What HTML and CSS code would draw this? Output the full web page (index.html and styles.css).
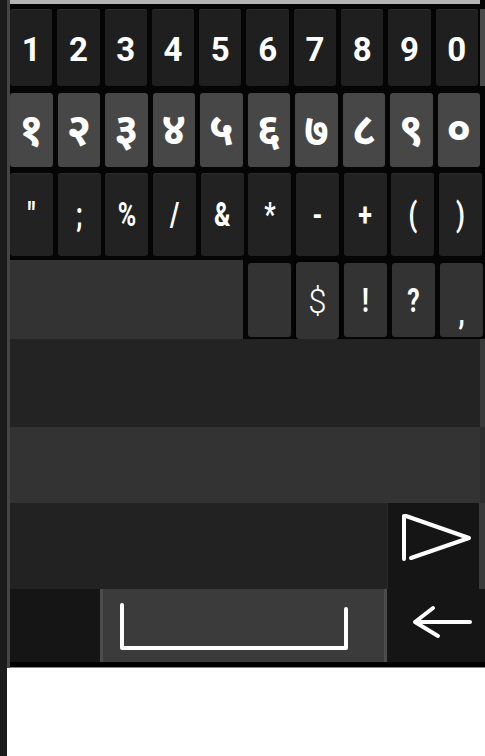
FILE: index.html
```html
<!DOCTYPE html>
<html>
<head>
<meta charset="utf-8">
<link rel="stylesheet" href="styles.css">
</head>
<body>
<div class="page">
  <div class="kb">
    <div class="topbar"></div>
    <div class="row r1">
      <div class="key">1</div><div class="key">2</div><div class="key">3</div><div class="key">4</div><div class="key">5</div>
      <div class="key">6</div><div class="key">7</div><div class="key">8</div><div class="key">9</div><div class="key">0</div>
    </div>
    <div class="row r2">
      <div class="key">१</div><div class="key">२</div><div class="key">३</div><div class="key">४</div><div class="key">५</div>
      <div class="key">६</div><div class="key">७</div><div class="key">८</div><div class="key">९</div><div class="key">०</div>
    </div>
    <div class="row r3">
      <div class="key"><span class="sym">"</span></div><div class="key"><span class="sym">;</span></div><div class="key"><span class="sym">%</span></div><div class="key"><span class="sym">/</span></div><div class="key"><span class="sym">&amp;</span></div>
      <div class="key"><span class="sym">*</span></div><div class="key"><span class="sym">-</span></div><div class="key"><span class="sym">+</span></div><div class="key"><span class="sym">(</span></div><div class="key"><span class="sym">)</span></div>
    </div>
    <div class="row r4">
      <div class="blank"></div>
      <div class="key"></div>
      <div class="key sel"><span class="dollar">$</span></div>
      <div class="key"><span class="sym">!</span></div>
      <div class="key"><span class="sym">?</span></div>
      <div class="key"><span class="sym comma">,</span></div>
    </div>
    <div class="panel p1"></div>
    <div class="panel p2"></div>
    <div class="bar b1">
      <div class="fill"></div>
      <div class="send">
        <svg width="91" height="86" viewBox="0 0 91 86"><path d="M16 13 V56 M23 55 L81 35 L18 13" fill="none" stroke="#fff" stroke-width="4" stroke-linecap="round" stroke-linejoin="round"/></svg>
      </div>
      <div class="edgefill"></div>
    </div>
    <div class="bar b2">
      <div class="fn"></div>
      <div class="space">
        <svg width="281" height="73" viewBox="0 0 281 73"><path d="M19 16 V59 H243 V20" fill="none" stroke="#fff" stroke-width="4" stroke-linecap="round" stroke-linejoin="round"/></svg>
      </div>
      <div class="back">
        <svg width="93" height="73" viewBox="0 0 93 73"><path d="M28 33 H83 M46 19 L28 33 L51 47" fill="none" stroke="#fff" stroke-width="4" stroke-linecap="round" stroke-linejoin="round"/></svg>
      </div>
      <div class="edgefill2"></div>
    </div>
    <div class="bottomline"></div>
  </div>
</div>
</body>
</html>
```
FILE: styles.css
```css
html, body {
  margin: 0;
  padding: 0;
  background: #ffffff;
}
.page {
  width: 478px;
  height: 756px;
  border-left: 7px solid #1c1c1c;
  display: flex;
  flex-direction: column;
}
.kb {
  height: 668px;
  background: #050505;
  border-left: 3px solid #454545;
  display: flex;
  flex-direction: column;
  font-family: Roboto, "Noto Sans", "Liberation Sans", sans-serif;
  color: #fff;
}
.topbar {
  height: 4px;
  background: #b4b4b4;
  margin-right: 5px;
  flex: none;
}
.row {
  display: grid;
  grid-template-columns: repeat(10, 1fr);
  column-gap: 5px;
  flex: none;
}
.key {
  border-radius: 3px;
  display: flex;
  align-items: center;
  justify-content: center;
  color: #fff;
  line-height: 1;
}
.r1 {
  height: 77px;
  margin-top: 5px;
  padding-right: 2px;
  border-right: 5px solid #4a4a4a;
}
.r1 .key {
  background: #1f1f1f;
  box-shadow: inset 0 1px 0 #2c2c2c;
  font-size: 33px;
  font-weight: 700;
  padding-top: 4px;
}
.r2 {
  height: 74px;
  margin-top: 7px;
  padding-right: 5px;
}
.r2 .key {
  background: #474747;
  font-family: "Noto Sans Devanagari", "Lohit Devanagari", "FreeSans", "Noto Sans", sans-serif;
  font-size: 44px;
  font-weight: 700;
  padding-top: 10px;
}
.r3 {
  height: 83px;
  margin-top: 6px;
  padding-right: 3px;
  column-gap: 4.5px;
}
.r3 .key {
  background: #222222;
  box-shadow: inset 0 1px 0 #2a2a2a;
}
.sym {
  display: inline-block;
  font-size: 25px;
  font-weight: 700;
  transform: scaleY(1.35);
}
.r4 {
  height: 79px;
  margin-top: 4px;
  padding-right: 2px;
  column-gap: 5px;
  grid-template-columns: 233px repeat(5, 1fr);
}
.r4 .blank {
  background: #333333;
}
.r4 .key {
  background: #333333;
  margin: 3px 0 2px;
}
.r4 .key.sel {
  outline: 2px solid #000;
  margin: 2px 0 0;
}
.dollar {
  font-size: 33px;
  font-weight: 300;
  padding-top: 2px;
}
.comma {
  padding-top: 18px;
}
.panel {
  flex: none;
}
.p1 {
  height: 88px;
  background: #232323;
  border-right: 5px solid #3a3a3a;
}
.p2 {
  height: 76px;
  background: #333333;
  border-right: 5px solid #2e2e2e;
}
.bar {
  display: flex;
  flex: none;
}
.b1 {
  height: 86px;
}
.b1 .fill {
  width: 377px;
  background: #222222;
}
.send {
  width: 91px;
  background: #151515;
  border-left: 1px solid #2a2a2a;
}
.send svg, .space svg, .back svg {
  display: block;
}
.edgefill {
  flex: 1;
  background: #3a3a3a;
}
.b2 {
  height: 73px;
}
.fn {
  width: 90px;
  background: #151515;
}
.space {
  width: 281px;
  background: #3b3b3b;
  border-left: 3px solid #4c4c4c;
  border-right: 3px solid #4c4c4c;
}
.back {
  width: 93px;
  background: #151515;
}
.edgefill2 {
  flex: 1;
  background: #151515;
}
.bottomline {
  height: 6px;
  flex: none;
  background: #000;
  border-bottom: 1px solid #888;
  box-sizing: border-box;
}
```
